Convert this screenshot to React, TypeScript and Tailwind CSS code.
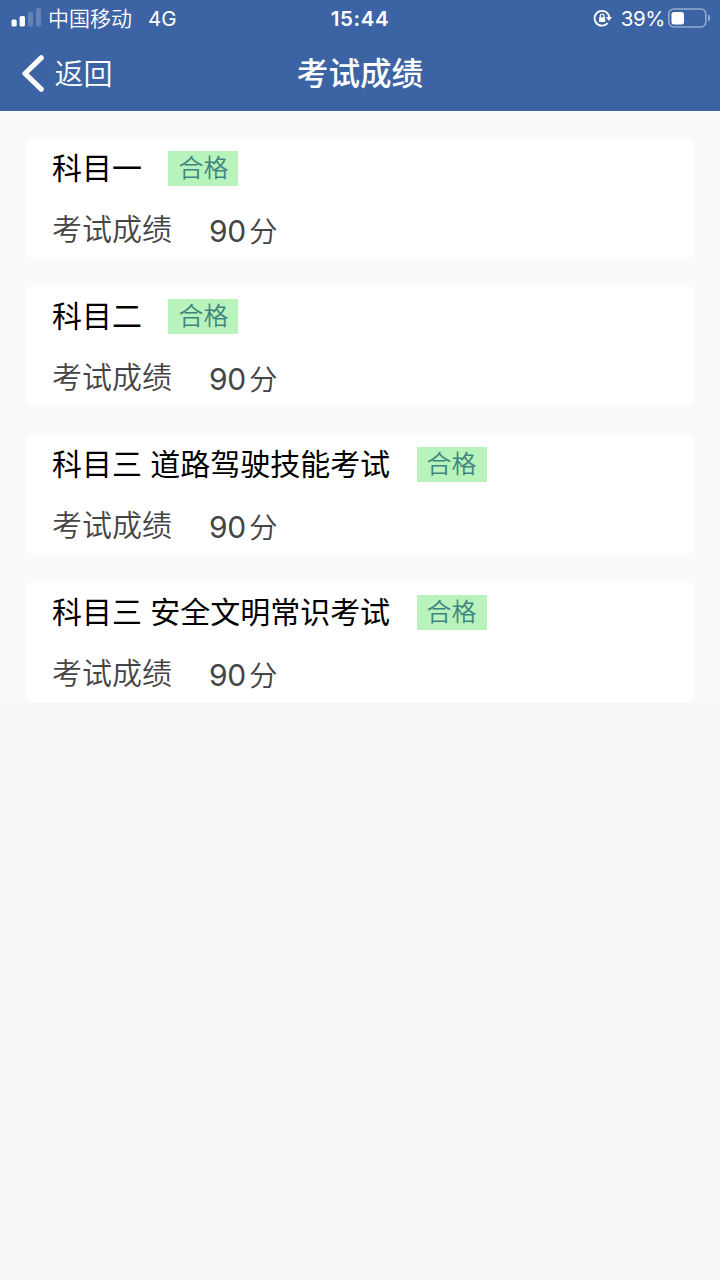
interface ExamResult {
  id: number
  subject: string
  score: number
  status: string
}

const results: ExamResult[] = [
  { id: 1, subject: '科目一', score: 90, status: '合格' },
  { id: 2, subject: '科目二', score: 90, status: '合格' },
  { id: 3, subject: '科目三 道路驾驶技能考试', score: 90, status: '合格' },
  { id: 4, subject: '科目三 安全文明常识考试', score: 90, status: '合格' },
]

function StatusBar() {
  return (
    <div className="relative flex h-9 items-center justify-between pr-[9px] pl-[11px] text-white">
      <div className="flex items-center">
        <svg className="mb-px" width="31" height="19" viewBox="0 0 31 19" fill="currentColor">
          <rect x="0.5" y="11.5" width="5.2" height="7" rx="1.5" />
          <rect x="8.6" y="8" width="5.4" height="10.5" rx="1.5" />
          <rect x="17" y="4" width="5" height="14.5" rx="1.5" opacity="0.2" />
          <rect x="25" y="0" width="5" height="18.5" rx="1.5" opacity="0.2" />
        </svg>
        <span className="ml-[6px] pt-px text-[21px] leading-9 font-[350]">中国移动</span>
        <span className="ml-4 pt-px text-[20.5px] leading-9">4G</span>
      </div>

      <span className="absolute inset-x-0 pt-px text-center text-[20.5px] leading-9 font-semibold tracking-[0.6px]">
        15:44
      </span>

      <div className="flex items-center">
        {/* Rotation lock */}
        <svg width="20" height="18" viewBox="0 0 20 18" fill="none">
          <path d="M14.6 14.1A7.4 7.4 0 1 1 16.3 8" stroke="currentColor" strokeWidth="1.8" />
          <path d="M12.9 8h6.2L16 12z" fill="currentColor" />
          <rect x="6" y="8.2" width="6.2" height="4.8" rx="0.6" fill="currentColor" />
          <path d="M7.3 8.5V6.8a1.8 1.8 0 0 1 3.6 0v1.7" stroke="currentColor" strokeWidth="1.2" />
        </svg>
        <span className="ml-2 pt-px text-[20.5px] leading-9 tracking-[-0.4px]">39%</span>
        {/* Battery */}
        <svg className="ml-[3px] mb-px" width="43" height="20" viewBox="0 0 43 20" fill="none">
          <rect x="0.8" y="1" width="37" height="18" rx="5" stroke="currentColor" strokeOpacity="0.45" strokeWidth="1.6" />
          <rect x="3.5" y="4" width="12.5" height="12.5" rx="2.5" fill="currentColor" />
          <path d="M40 6.5c3 1 3 6 0 7z" fill="currentColor" fillOpacity="0.45" />
        </svg>
      </div>
    </div>
  )
}

function NavBar() {
  return (
    <div className="relative flex h-[75px] items-center pl-[22px] text-white">
      <h1 className="absolute inset-x-0 pb-px text-center text-[31.6px] leading-[73px] font-medium">考试成绩</h1>
      <button className="relative flex items-center">
        <svg width="22" height="37" viewBox="0 0 22 37" fill="none">
          <path d="M19.2 2.8L3 18.5l16.2 15.7" stroke="currentColor" strokeWidth="5.2" strokeLinecap="round" strokeLinejoin="round" />
        </svg>
        <span className="ml-[10.5px] pt-px text-[29px] leading-[75px] font-[350]">返回</span>
      </button>
    </div>
  )
}

function ResultCard({ subject, score, status }: ExamResult) {
  return (
    <li className="h-[122px] rounded-lg bg-white px-[26px] pt-[10px]">
      <div className="flex h-[42px] items-center">
        <h2 className="text-[30px] leading-[42px] tracking-[-0.03px] whitespace-pre text-black">{subject}</h2>
        <span className="ml-[26.5px] h-[35px] bg-[#b7f3bb] px-[10px] text-[25px] leading-[35px] font-[350] text-[#3f8581]">
          {status}
        </span>
      </div>
      <div className="mt-[19px] flex h-[43px] items-center text-[30px] leading-[43px] text-[#454545]">
        <span className="font-[350]">考试成绩</span>
        <span className="ml-[37px] pt-[3px] tracking-[-0.3px]">{score}</span>
        <span className="ml-[3px] pt-1 text-[28.5px] font-[350]">分</span>
      </div>
    </li>
  )
}

export default function App() {
  return (
    <div className="min-h-screen bg-[#f5f7f9] font-['Inter','Noto_Sans_CJK_SC',sans-serif]">
      <header className="h-[111px] bg-[#3c64a4]">
        <StatusBar />
        <NavBar />
      </header>
      <ul className="flex flex-col gap-[26px] bg-[#f9fafc] px-[26px] pt-[26px]">
        {results.map((result) => (
          <ResultCard key={result.id} {...result} />
        ))}
      </ul>
    </div>
  )
}
